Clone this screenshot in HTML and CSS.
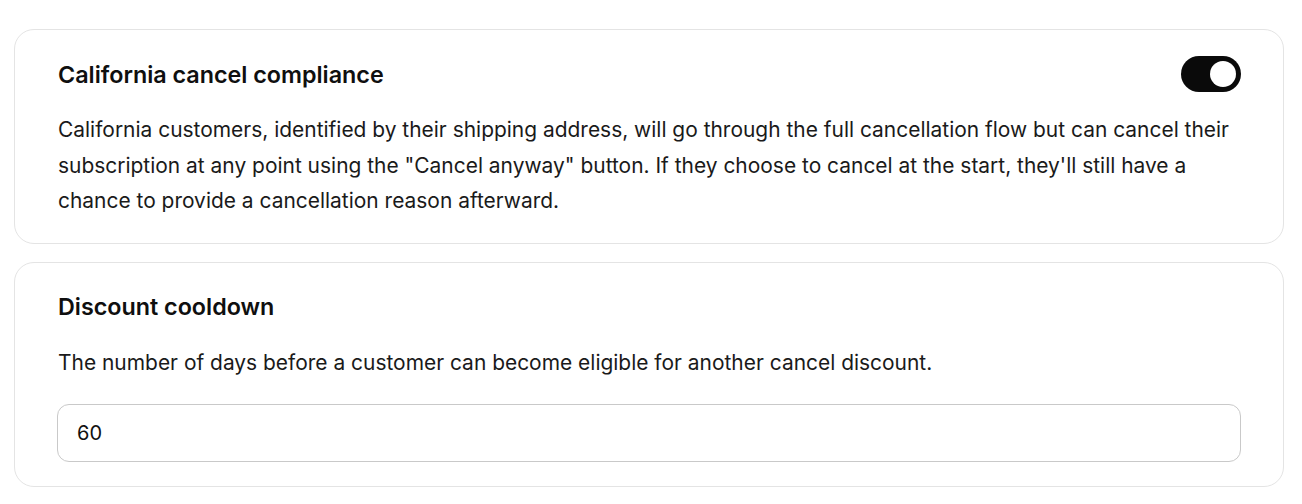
FILE: index.html
```html
<!DOCTYPE html>
<html>
<head>
<meta charset="utf-8">
<link rel="stylesheet" href="styles.css">
</head>
<body>
<div class="page">
  <section class="card">
    <div class="card-head">
      <h2 class="card-title">California cancel compliance</h2>
      <div class="toggle on"><span class="knob"></span></div>
    </div>
    <p class="card-text">California customers, identified by their shipping address, will go through the full cancellation flow but can cancel their subscription at any point using the "Cancel anyway" button. If they choose to cancel at the start, they'll still have a chance to provide a cancellation reason afterward.</p>
  </section>
  <section class="card">
    <div class="card-head">
      <h2 class="card-title">Discount cooldown</h2>
    </div>
    <p class="card-text">The number of days before a customer can become eligible for another cancel discount.</p>
    <div class="field"><input class="input" type="text" value="60"></div>
  </section>
</div>
</body>
</html>
```
FILE: styles.css
```css
* { box-sizing: border-box; }
html, body { margin: 0; padding: 0; background: #ffffff; }
body {
  font-family: Inter, "Noto Sans", "Liberation Sans", sans-serif;
  color: #161616;
}
.page {
  padding: 29px 18px 0 14px;
  display: flex;
  flex-direction: column;
  gap: 18px;
}
.card {
  border: 1px solid #e4e4e4;
  border-radius: 20px;
  padding: 24px 42px 24px 42px;
  display: flex;
  flex-direction: column;
  gap: 18px;
  background: #fff;
}
.card-head {
  height: 40px;
  display: flex;
  align-items: center;
  justify-content: space-between;
  padding-left: 1px;
}
.card-title {
  margin: 0;
  font-size: 23.3px;
  font-weight: 600;
  color: #0f0f0f;
}
.toggle {
  width: 60px;
  height: 36px;
  border-radius: 18px;
  background: #0a0a0a;
  display: flex;
  align-items: center;
  padding: 5px;
  justify-content: flex-end;
}
.knob {
  width: 26px;
  height: 26px;
  border-radius: 50%;
  background: #fff;
}
.card-text {
  margin: 0;
  padding-left: 1px;
  font-size: 20.95px;
  line-height: 35.5px;
  color: #1a1a1a;
}
.field { margin-top: 6px; }
.input {
  width: 100%;
  height: 58px;
  border: 1px solid #c9c9c9;
  border-radius: 12px;
  padding: 0 19px;
  font-family: inherit;
  font-size: 20px;
  color: #111;
  outline: none;
  background: #fff;
}
```
